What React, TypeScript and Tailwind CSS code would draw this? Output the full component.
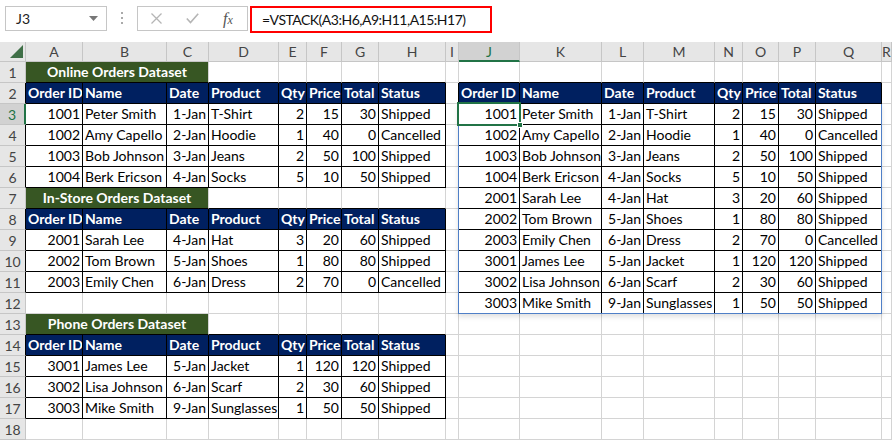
import React from 'react';

type Kind = 'title' | 'head' | 'data' | 'empty';

interface CellInfo {
  text: string;
  kind: Kind;
  align: 'l' | 'r' | 'c';
  span?: number;
}

const COLS = ['A', 'B', 'C', 'D', 'E', 'F', 'G', 'H', 'I', 'J', 'K', 'L', 'M', 'N', 'O', 'P', 'Q', 'R'];
const ROWS = Array.from({ length: 18 }, (_, i) => i + 1);

const HEADERS = ['Order ID', 'Name', 'Date', 'Product', 'Qty', 'Price', 'Total', 'Status'];
const ALIGN: ('l' | 'r')[] = ['r', 'l', 'r', 'l', 'r', 'r', 'r', 'l'];

const online = [
  ['1001', 'Peter Smith', '1-Jan', 'T-Shirt', '2', '15', '30', 'Shipped'],
  ['1002', 'Amy Capello', '2-Jan', 'Hoodie', '1', '40', '0', 'Cancelled'],
  ['1003', 'Bob Johnson', '3-Jan', 'Jeans', '2', '50', '100', 'Shipped'],
  ['1004', 'Berk Ericson', '4-Jan', 'Socks', '5', '10', '50', 'Shipped'],
];
const instore = [
  ['2001', 'Sarah Lee', '4-Jan', 'Hat', '3', '20', '60', 'Shipped'],
  ['2002', 'Tom Brown', '5-Jan', 'Shoes', '1', '80', '80', 'Shipped'],
  ['2003', 'Emily Chen', '6-Jan', 'Dress', '2', '70', '0', 'Cancelled'],
];
const phone = [
  ['3001', 'James Lee', '5-Jan', 'Jacket', '1', '120', '120', 'Shipped'],
  ['3002', 'Lisa Johnson', '6-Jan', 'Scarf', '2', '30', '60', 'Shipped'],
  ['3003', 'Mike Smith', '9-Jan', 'Sunglasses', '1', '50', '50', 'Shipped'],
];

// build the sheet contents keyed by "row,col"
const sheet: Record<string, CellInfo> = {};
const put = (r: number, c: number, info: CellInfo) => {
  sheet[`${r},${c}`] = info;
};

function block(titleRow: number | null, headRow: number, col: number, title: string, rows: string[][]) {
  if (titleRow) put(titleRow, col, { text: title, kind: 'title', align: 'c', span: 3 });
  HEADERS.forEach((h, i) => put(headRow, col + i, { text: h, kind: 'head', align: 'l' }));
  rows.forEach((row, ri) =>
    row.forEach((v, i) => put(headRow + 1 + ri, col + i, { text: v, kind: 'data', align: ALIGN[i] }))
  );
}

block(1, 2, 0, 'Online Orders Dataset', online);
block(7, 8, 0, 'In-Store Orders Dataset', instore);
block(13, 14, 0, 'Phone Orders Dataset', phone);
block(null, 2, 9, '', [...online, ...instore, ...phone]);

const get = (r: number, c: number): CellInfo | undefined => sheet[`${r},${c}`];
const isTable = (r: number, c: number) => {
  const k = get(r, c)?.kind;
  return k === 'head' || k === 'data';
};
// cells covered by a merged title
const covered = (r: number, c: number) => {
  for (let s = 1; s <= 2; s++) {
    const left = get(r, c - s);
    if (left?.span && left.span > s) return true;
  }
  return false;
};

function Toolbar() {
  return (
    <div className="h-[42px] bg-white flex items-start pt-[6px] pl-[5px]">
      <div className="w-[102px] h-[25px] border border-[#c6c6c6] flex items-center justify-between pl-[10px] pr-[8px]">
        <span className="text-[14px] text-[#222]">J3</span>
        <svg width="9" height="5" viewBox="0 0 9 5">
          <path d="M0 0 L9 0 L4.5 5 Z" fill="#777" />
        </svg>
      </div>
      <div className="ml-[14px] mt-[6px] flex flex-col gap-[3px]">
        <div className="w-[2px] h-[2px] bg-[#aaa]" />
        <div className="w-[2px] h-[2px] bg-[#aaa]" />
        <div className="w-[2px] h-[2px] bg-[#aaa]" />
      </div>
      <div className="ml-[14px] w-[111px] h-[25px] border border-[#c6c6c6] flex items-center pl-[13px]">
        <svg width="11" height="11" viewBox="0 0 11 11">
          <path d="M0.5 0.5 L10.5 10.5 M10.5 0.5 L0.5 10.5" stroke="#b5b5b5" strokeWidth="1.3" />
        </svg>
        <svg className="ml-[24px]" width="13" height="11" viewBox="0 0 13 11">
          <path d="M0.8 5.5 L4.5 9.5 L12.2 0.8" stroke="#b5b5b5" strokeWidth="1.6" fill="none" />
        </svg>
        <span className="ml-[24px] font-['Liberation_Serif',serif] italic text-[16px] text-[#555] leading-none">
          f<span className="text-[12px]">x</span>
        </span>
      </div>
      <div className="ml-[2px] w-[242px] h-[27px] border-2 border-[#ff0000] flex items-center pl-[10px]">
        <span className="text-[14px] text-[#111] tracking-[-0.5px]">=VSTACK(A3:H6,A9:H11,A15:H17)</span>
      </div>
    </div>
  );
}

function ColumnHeaders() {
  return (
    <>
      <div className="h-[20px] bg-[#e6e6e6] border-r border-b border-[#c6c6c6] flex items-end justify-end pr-[2px] pb-[3px]">
        <svg width="13" height="13" viewBox="0 0 13 13">
          <path d="M13 0 L13 13 L0 13 Z" fill="#3f6f47" />
        </svg>
      </div>
      {COLS.map((c) =>
        c === 'J' ? (
          <div
            key={c}
            className="h-[20px] bg-[#d2d2d2] border-r border-r-[#c6c6c6] border-b-2 border-b-[#217346] flex items-center justify-center text-[14px] text-[#217346]"
          >
            {c}
          </div>
        ) : (
          <div
            key={c}
            className="h-[20px] bg-[#e6e6e6] border-r border-b border-[#c6c6c6] flex items-center justify-center text-[14px] text-[#444] overflow-hidden"
          >
            {c}
          </div>
        )
      )}
    </>
  );
}

function SheetCell({ r, c }: { r: number; c: number }) {
  const info = get(r, c);
  const right = isTable(r, c) || isTable(r, c + 1);
  const bottom = isTable(r, c) || isTable(r + 1, c);
  const rb = right ? 'border-r-black' : 'border-r-[#d4d4d4]';
  const bb = bottom ? 'border-b-black' : 'border-b-[#d4d4d4]';
  let look = 'bg-white text-black';
  if (info?.kind === 'title') look = 'bg-[#375623] text-white font-bold col-span-3';
  if (info?.kind === 'head') look = 'bg-[#002060] text-white font-bold';
  const just = info?.align === 'r' ? 'justify-end' : info?.align === 'c' ? 'justify-center' : 'justify-start';
  return (
    <div
      className={`h-[21px] border-r border-b ${rb} ${bb} ${look} ${just} flex items-end px-[2px] pb-[1px] leading-[18px] whitespace-nowrap overflow-hidden`}
    >
      {info?.text}
    </div>
  );
}

function RowHeader({ r }: { r: number }) {
  if (r === 3) {
    return (
      <div className="h-[21px] bg-[#d2d2d2] border-r-2 border-r-[#217346] border-b border-b-[#c6c6c6] flex items-center justify-center text-[14px] text-[#217346]">
        {r}
      </div>
    );
  }
  const rb = isTable(r, 0) ? 'border-r-black' : 'border-r-[#c6c6c6]';
  return (
    <div
      className={`h-[21px] bg-[#e6e6e6] border-r ${rb} border-b border-b-[#c6c6c6] flex items-center justify-center text-[14px] text-[#444]`}
    >
      {r}
    </div>
  );
}

export default function App() {
  return (
    <div className="w-[892px] h-[440px] overflow-hidden bg-white font-[Lato,sans-serif] text-[14px]">
      <Toolbar />
      <div className="relative grid grid-cols-[26px_57px_84px_42px_70px_28px_35px_37px_67px_13px_61px_82px_42px_71px_28px_36px_37px_66px_1fr]">
        <ColumnHeaders />
        {ROWS.map((r) => (
          <React.Fragment key={r}>
            <RowHeader r={r} />
            {COLS.map((_, c) => (covered(r, c) ? null : <SheetCell key={c} r={r} c={c} />))}
          </React.Fragment>
        ))}
        {/* spill range outline */}
        <div className="absolute left-[458px] top-[62px] w-[424px] h-[210px] border-l border-r border-b border-[#4f7fc7] shadow-[0_3px_5px_rgba(0,0,0,0.12)] pointer-events-none" />
        {/* active cell J3 */}
        <div className="absolute left-[457px] top-[60px] w-[64px] h-[24px] border-2 border-[#217346] pointer-events-none">
          <div className="absolute -right-[4px] -bottom-[4px] w-[6px] h-[6px] bg-[#217346] border border-white" />
        </div>
      </div>
    </div>
  );
}
